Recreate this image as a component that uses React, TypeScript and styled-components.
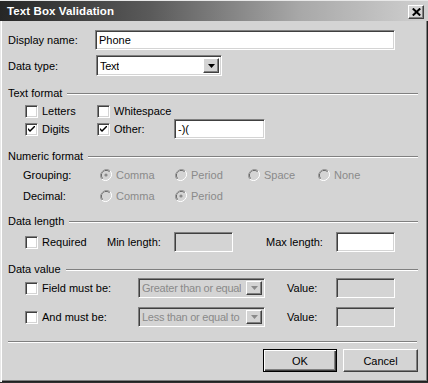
import React from "react";
import styled, { createGlobalStyle, css } from "styled-components";

const FACE = "#d4d4d4";
const SHADOW = "#808080";
const DARK = "#404040";
const LIGHT = "#ffffff";
const DISABLED = "#8a8a8a";

const Global = createGlobalStyle`
  html, body { margin: 0; padding: 0; background: ${FACE}; }
  body { font-family: "Liberation Sans", Arial, sans-serif; font-size: 11px; color: #000; }
`;

const Window = styled.div`
  width: 428px;
  height: 383px;
  box-sizing: border-box;
  background: ${FACE};
  display: flex;
  flex-direction: column;
  box-shadow: inset 1px 1px 0 #e8e8e8, inset 2px 2px 0 ${LIGHT}, inset -1px -1px 0 #202020,
    inset -2px -2px 0 ${SHADOW};
  border-bottom: 1px solid #303030;
`;

const TitleBar = styled.div`
  margin-top: 1px;
  height: 20px;
  display: flex;
  align-items: center;
  justify-content: space-between;
  padding: 0 4px 0 7px;
  background: linear-gradient(to right, #262626 0%, #5a5a5a 35%, #a8a8a8 70%, #d0d0d0 100%);
`;

const Title = styled.span`
  color: #fff;
  font-weight: bold;
  font-size: 11.5px;
  letter-spacing: 0.1px;
`;

const raised = css`
  box-sizing: border-box;
  background: ${FACE};
  border: 1px solid;
  border-color: ${LIGHT} ${DARK} ${DARK} ${LIGHT};
  box-shadow: inset -1px -1px 0 ${SHADOW};
`;

const sunken = css`
  box-sizing: border-box;
  border: 1px solid;
  border-color: ${SHADOW} ${LIGHT} ${LIGHT} ${SHADOW};
  box-shadow: inset 1px 1px 0 ${DARK}, inset -1px -1px 0 ${FACE};
`;

const CloseButton = styled.div`
  ${raised};
  width: 16px;
  height: 14px;
  margin-top: 2px;
  display: flex;
  align-items: center;
  justify-content: center;
`;

const Body = styled.div`
  display: flex;
  flex-direction: column;
  padding: 0 10px 0 8px;
`;

const Row = styled.div<{ $h: number; $mt: number; $ml?: number }>`
  display: flex;
  align-items: center;
  height: ${(p) => p.$h}px;
  margin-top: ${(p) => p.$mt}px;
  margin-left: ${(p) => p.$ml ?? 0}px;
`;

const Label = styled.span<{ $w: number; $disabled?: boolean; $ml?: number }>`
  width: ${(p) => p.$w}px;
  margin-left: ${(p) => p.$ml ?? 0}px;
  flex: none;
  white-space: nowrap;
  color: ${(p) => (p.$disabled ? DISABLED : "#000")};
`;

const TextBox = styled.div<{ $w: number; $disabled?: boolean; $ml?: number }>`
  ${sunken};
  width: ${(p) => p.$w}px;
  height: 100%;
  flex: none;
  margin-left: ${(p) => p.$ml ?? 0}px;
  background: ${(p) => (p.$disabled ? FACE : LIGHT)};
  padding: 0 0 0 3px;
  display: flex;
  align-items: center;
  white-space: nowrap;
  overflow: hidden;
`;

const Select = styled.div<{ $w: number; $disabled?: boolean; $ml?: number }>`
  ${sunken};
  width: ${(p) => p.$w}px;
  height: 100%;
  flex: none;
  margin-left: ${(p) => p.$ml ?? 0}px;
  background: ${(p) => (p.$disabled ? FACE : LIGHT)};
  color: ${(p) => (p.$disabled ? DISABLED : "#000")};
  padding: 2px 2px 2px 3px;
  display: flex;
  align-items: center;
  justify-content: space-between;
  white-space: nowrap;
  overflow: hidden;
`;

const SelectText = styled.span`
  overflow: hidden;
  white-space: nowrap;
  letter-spacing: -0.25px;
`;

const ArrowButton = styled.div`
  ${raised};
  width: 16px;
  height: 100%;
  flex: none;
  display: flex;
  align-items: center;
  justify-content: center;
  margin-left: 1px;
`;

const Heading = styled.div<{ $mt: number }>`
  display: flex;
  align-items: center;
  height: 14px;
  margin-top: ${(p) => p.$mt}px;
  gap: 5px;
`;

const Etched = styled.div`
  flex: 1;
  height: 0;
  border-top: 1px solid ${SHADOW};
  border-bottom: 1px solid ${LIGHT};
  margin-top: 1px;
`;

const CheckItem = styled.label<{ $w: number }>`
  display: flex;
  align-items: center;
  gap: 4px;
  width: ${(p) => p.$w}px;
  flex: none;
  white-space: nowrap;
`;

const Box = styled.span`
  ${sunken};
  width: 13px;
  height: 13px;
  background: ${LIGHT};
  display: flex;
  align-items: center;
  justify-content: center;
  flex: none;
`;

const RadioItem = styled.span<{ $w: number }>`
  display: flex;
  align-items: center;
  gap: 4px;
  width: ${(p) => p.$w}px;
  flex: none;
  color: ${DISABLED};
  white-space: nowrap;
`;

const Separator = styled.div`
  height: 0;
  border-top: 1px solid ${SHADOW};
  border-bottom: 1px solid ${LIGHT};
  margin-top: 14px;
  margin-right: 1px;
`;

const ButtonRow = styled.div`
  display: flex;
  justify-content: flex-end;
  gap: 6px;
  margin-top: 6px;
`;

const Button = styled.div<{ $w: number; $default?: boolean }>`
  ${raised};
  width: ${(p) => p.$w}px;
  height: 23px;
  display: flex;
  align-items: center;
  justify-content: center;
  ${(p) =>
    p.$default &&
    css`
      border: 1px solid #000;
      box-shadow: inset 1px 1px 0 ${LIGHT}, inset -1px -1px 0 ${DARK}, inset -2px -2px 0 ${SHADOW};
    `}
`;

const Check = ({ checked }: { checked?: boolean }) => (
  <Box>
    {checked && (
      <svg width="7" height="7" viewBox="0 0 7 7">
        <path d="M0 2 L0 4 L2 6 L7 1 L7 -1 L2 4 Z" fill="#000" />
      </svg>
    )}
  </Box>
);

const Radio = ({ checked }: { checked?: boolean }) => (
  <svg width="12" height="12" viewBox="0 0 12 12">
    <path d="M10.2 1.8 A6 6 0 0 0 1.8 10.2" fill="none" stroke="#9a9a9a" strokeWidth="1" />
    <path d="M9.5 2.5 A5 5 0 0 0 2.5 9.5" fill="none" stroke="#5a5a5a" strokeWidth="1" />
    <path d="M1.8 10.2 A6 6 0 0 0 10.2 1.8" fill="none" stroke="#ffffff" strokeWidth="1" />
    <circle cx="6" cy="6" r="4" fill={FACE} />
    {checked && <circle cx="6" cy="6" r="1.6" fill="#8a8a8a" />}
  </svg>
);

const Arrow = ({ color }: { color: string }) => (
  <svg width="7" height="4" viewBox="0 0 7 4">
    <path d="M0 0 H7 L3.5 4 Z" fill={color} />
  </svg>
);

export default function App() {
  return (
    <>
      <Global />
      <Window>
        <TitleBar>
          <Title>Text Box Validation</Title>
          <CloseButton>
            <svg width="9" height="8" viewBox="0 0 9 8">
              <path d="M0.8 0.5 L8.2 7.5 M8.2 0.5 L0.8 7.5" stroke="#000" strokeWidth="2" />
            </svg>
          </CloseButton>
        </TitleBar>
        <Body>
          <Row $h={20} $mt={9}>
            <Label $w={87}>Display name:</Label>
            <TextBox $w={300}>Phone</TextBox>
          </Row>
          <Row $h={21} $mt={5}>
            <Label $w={87}>Data type:</Label>
            <Select $w={126} $ml={1}>
              <SelectText>Text</SelectText>
              <ArrowButton>
                <Arrow color="#000" />
              </ArrowButton>
            </Select>
          </Row>

          <Heading $mt={10}>
            Text format
            <Etched />
          </Heading>
          <Row $h={16} $mt={3} $ml={17}>
            <CheckItem $w={72}>
              <Check />
              Letters
            </CheckItem>
            <CheckItem $w={77}>
              <Check />
              Whitespace
            </CheckItem>
          </Row>
          <Row $h={20} $mt={0} $ml={17}>
            <CheckItem $w={72}>
              <Check checked />
              Digits
            </CheckItem>
            <CheckItem $w={77}>
              <Check checked />
              Other:
            </CheckItem>
            <TextBox $w={91}>-)(</TextBox>
          </Row>

          <Heading $mt={10}>
            Numeric format
            <Etched />
          </Heading>
          <Row $h={16} $mt={4} $ml={15}>
            <Label $w={77}>Grouping:</Label>
            <RadioItem $w={75}>
              <Radio checked />
              Comma
            </RadioItem>
            <RadioItem $w={73}>
              <Radio />
              Period
            </RadioItem>
            <RadioItem $w={70}>
              <Radio />
              Space
            </RadioItem>
            <RadioItem $w={60}>
              <Radio />
              None
            </RadioItem>
          </Row>
          <Row $h={16} $mt={5} $ml={15}>
            <Label $w={77}>Decimal:</Label>
            <RadioItem $w={75}>
              <Radio />
              Comma
            </RadioItem>
            <RadioItem $w={73}>
              <Radio checked />
              Period
            </RadioItem>
          </Row>

          <Heading $mt={10}>
            Data length
            <Etched />
          </Heading>
          <Row $h={20} $mt={4} $ml={17}>
            <CheckItem $w={82}>
              <Check />
              Required
            </CheckItem>
            <Label $w={67}>Min length:</Label>
            <TextBox $w={59} $disabled />
            <Label $w={70} $ml={33}>
              Max length:
            </Label>
            <TextBox $w={59} />
          </Row>

          <Heading $mt={10}>
            Data value
            <Etched />
          </Heading>
          <Row $h={20} $mt={2} $ml={17}>
            <CheckItem $w={113}>
              <Check />
              Field must be:
            </CheckItem>
            <Select $w={127} $disabled>
              <SelectText>Greater than or equal</SelectText>
              <ArrowButton>
                <Arrow color="#8a8a8a" />
              </ArrowButton>
            </Select>
            <Label $w={49} $ml={22}>
              Value:
            </Label>
            <TextBox $w={59} $disabled />
          </Row>
          <Row $h={20} $mt={9} $ml={17}>
            <CheckItem $w={113}>
              <Check />
              And must be:
            </CheckItem>
            <Select $w={127} $disabled>
              <SelectText>Less than or equal to</SelectText>
              <ArrowButton>
                <Arrow color="#8a8a8a" />
              </ArrowButton>
            </Select>
            <Label $w={49} $ml={22}>
              Value:
            </Label>
            <TextBox $w={59} $disabled />
          </Row>

          <Separator />
          <ButtonRow>
            <Button $w={74} $default>
              OK
            </Button>
            <Button $w={75}>Cancel</Button>
          </ButtonRow>
        </Body>
      </Window>
    </>
  );
}
